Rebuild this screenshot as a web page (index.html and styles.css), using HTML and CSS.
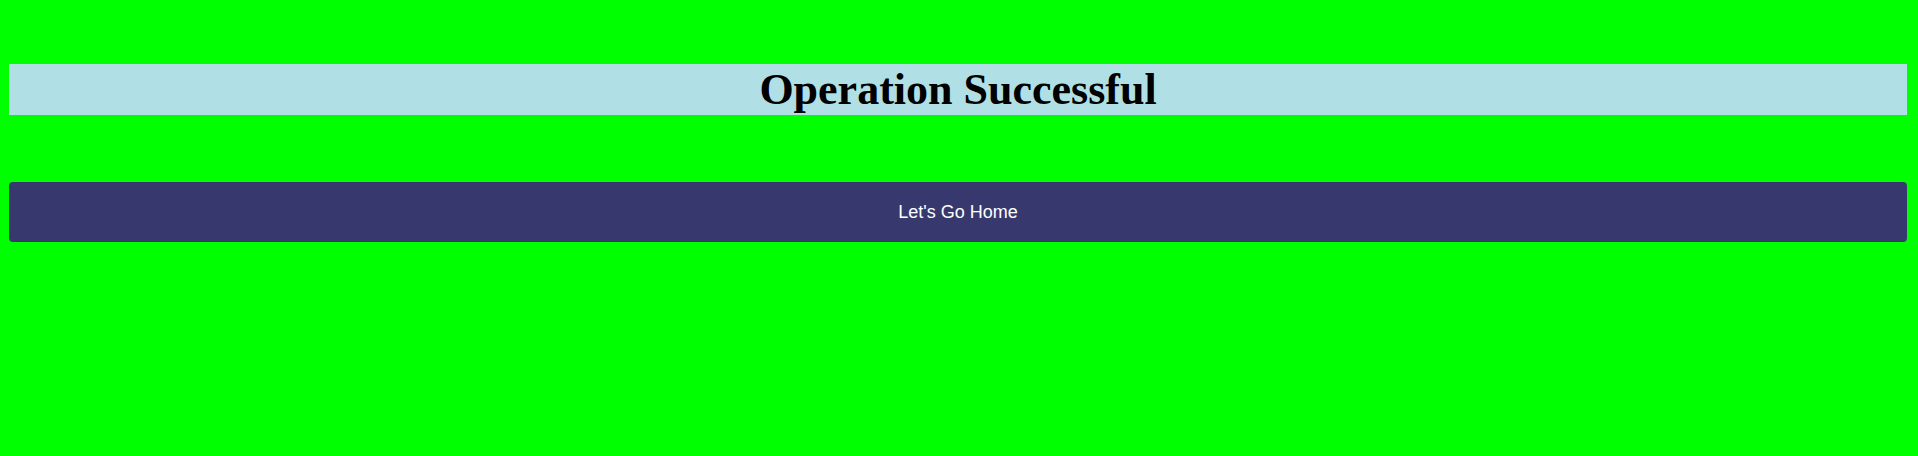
FILE: index.html
```html
<!DOCTYPE html>
<html>
<head>
<meta charset="utf-8">
<link rel="stylesheet" href="styles.css">
</head>
<body>
<div class="page">
  <h1 class="title">Operation Successful</h1>
  <button class="home-btn">Let's Go Home</button>
</div>
</body>
</html>
```
FILE: styles.css
```css
html, body {
  margin: 0;
  padding: 0;
  background: #00ff00;
}
.page {
  display: flex;
  flex-direction: column;
  padding: 64px 11px 0 9px;
  gap: 67px;
}
.title {
  margin: 0;
  background: #b0e0e6;
  color: #000;
  font-family: "Liberation Serif", "Times New Roman", serif;
  font-weight: bold;
  font-size: 44px;
  line-height: 51px;
  height: 51px;
  text-align: center;
}
.home-btn {
  height: 60px;
  border: none;
  border-radius: 4px;
  background: #37396e;
  color: #fff;
  font-family: "Liberation Sans", Arial, sans-serif;
  font-size: 18px;
  padding: 0;
  cursor: pointer;
}
```
